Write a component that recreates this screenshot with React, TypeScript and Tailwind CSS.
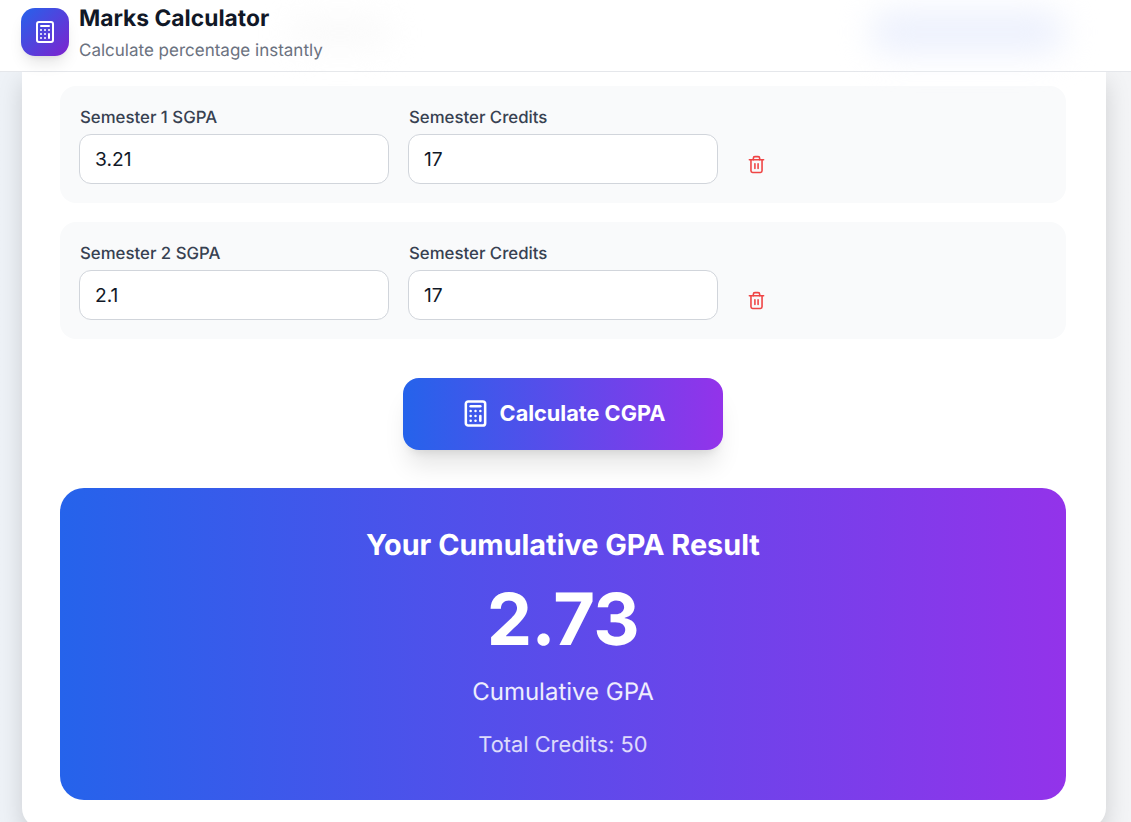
import { Calculator, Trash2 } from "lucide-react";

const semesters = [
  { label: "Semester 1 SGPA", sgpa: "3.21", credits: "17" },
  { label: "Semester 2 SGPA", sgpa: "2.1", credits: "17" },
];

function Field({ label, value }: { label: string; value: string }) {
  return (
    <div className="w-[310px]">
      <label className="mb-[4px] block pt-[1px] pl-[1px] text-[16.8px] leading-[24px] font-medium text-[#374151]">{label}</label>
      <input
        readOnly
        value={value}
        className="h-[50px] w-full rounded-[12px] border border-[#d1d5db] bg-white px-[15px] text-[19.2px] text-[#111827] outline-none"
      />
    </div>
  );
}

export default function App() {
  return (
    <div className="relative h-[822px] overflow-hidden bg-gradient-to-r from-[#eef2f7] to-[#f3f4f6] font-['Inter',sans-serif] [text-rendering:geometricPrecision]">
      <header className="relative z-10 flex h-[72px] items-start gap-[10px] border-b border-[#e5e7eb] bg-white pt-[8px] pl-[21px]">
        <div className="absolute top-[10px] left-[870px] h-[44px] w-[195px] rounded-full bg-[#edf1fd] blur-lg" />
        <div className="absolute top-[20px] left-[290px] h-[26px] w-[100px] rounded-full bg-[#f9f9f9] blur-lg" />
        <div className="relative flex h-[48px] w-[48px] items-center justify-center rounded-[14px] bg-linear-to-br/srgb from-[#2563eb] to-[#7e22ce] text-white shadow-lg">
          <Calculator className="h-[24px] w-[24px]" />
        </div>
        <div className="relative">
          <h1 className="text-[22.8px] leading-[21px] font-bold text-[#111827]">Marks Calculator</h1>
          <p className="mt-[10px] text-[17px] leading-[24px] text-[#6b7280]">Calculate percentage instantly</p>
        </div>
      </header>

      <main className="ml-[22px] h-[756px] w-[1084px] rounded-b-[20px] bg-white pt-[14px] pr-[40px] pl-[38px] shadow-[0_10px_25px_rgba(0,0,0,0.15)]">
        <div className="flex flex-col gap-[19px]">
          {semesters.map((s) => (
            <div key={s.label} className="flex h-[117px] gap-[19px] rounded-[16px] bg-[#f9fafb] px-[19px] pt-[19px]">
              <Field label={s.label} value={s.sgpa} />
              <Field label="Semester Credits" value={s.credits} />
              <button className="mt-[49px] ml-[9px] flex h-[20px] w-[20px] items-center justify-center text-[#ef4444]">
                <Trash2 className="h-[19px] w-[19px]" strokeWidth={2} />
              </button>
            </div>
          ))}
        </div>

        <div className="mt-[39px] flex justify-center">
          <button className="flex h-[72px] w-[320px] items-center justify-center gap-[10px] rounded-[16px] bg-linear-to-r/srgb from-[#2563eb] to-[#9333ea] pb-[1px] text-[21.7px] font-bold text-white shadow-xl">
            <Calculator className="h-[29px] w-[29px]" strokeWidth={2.1} />
            Calculate CGPA
          </button>
        </div>

        <section className="mt-[38px] flex h-[312px] flex-col items-center rounded-[24px] bg-linear-to-r/srgb from-[#2563eb] to-[#9333ea] text-white">
          <h2 className="mt-[39px] text-[28.8px] leading-[36px] font-bold">Your Cumulative GPA Result</h2>
          <div className="mt-[17px] text-[72px] leading-[80px] font-bold tracking-[-0.5px]">2.73</div>
          <div className="mt-[16px] text-[24px] leading-[32px] text-white/90">Cumulative GPA</div>
          <div className="mt-[23px] text-[21.8px] leading-[28px] text-white/80">Total Credits: 50</div>
        </section>
      </main>
    </div>
  );
}
